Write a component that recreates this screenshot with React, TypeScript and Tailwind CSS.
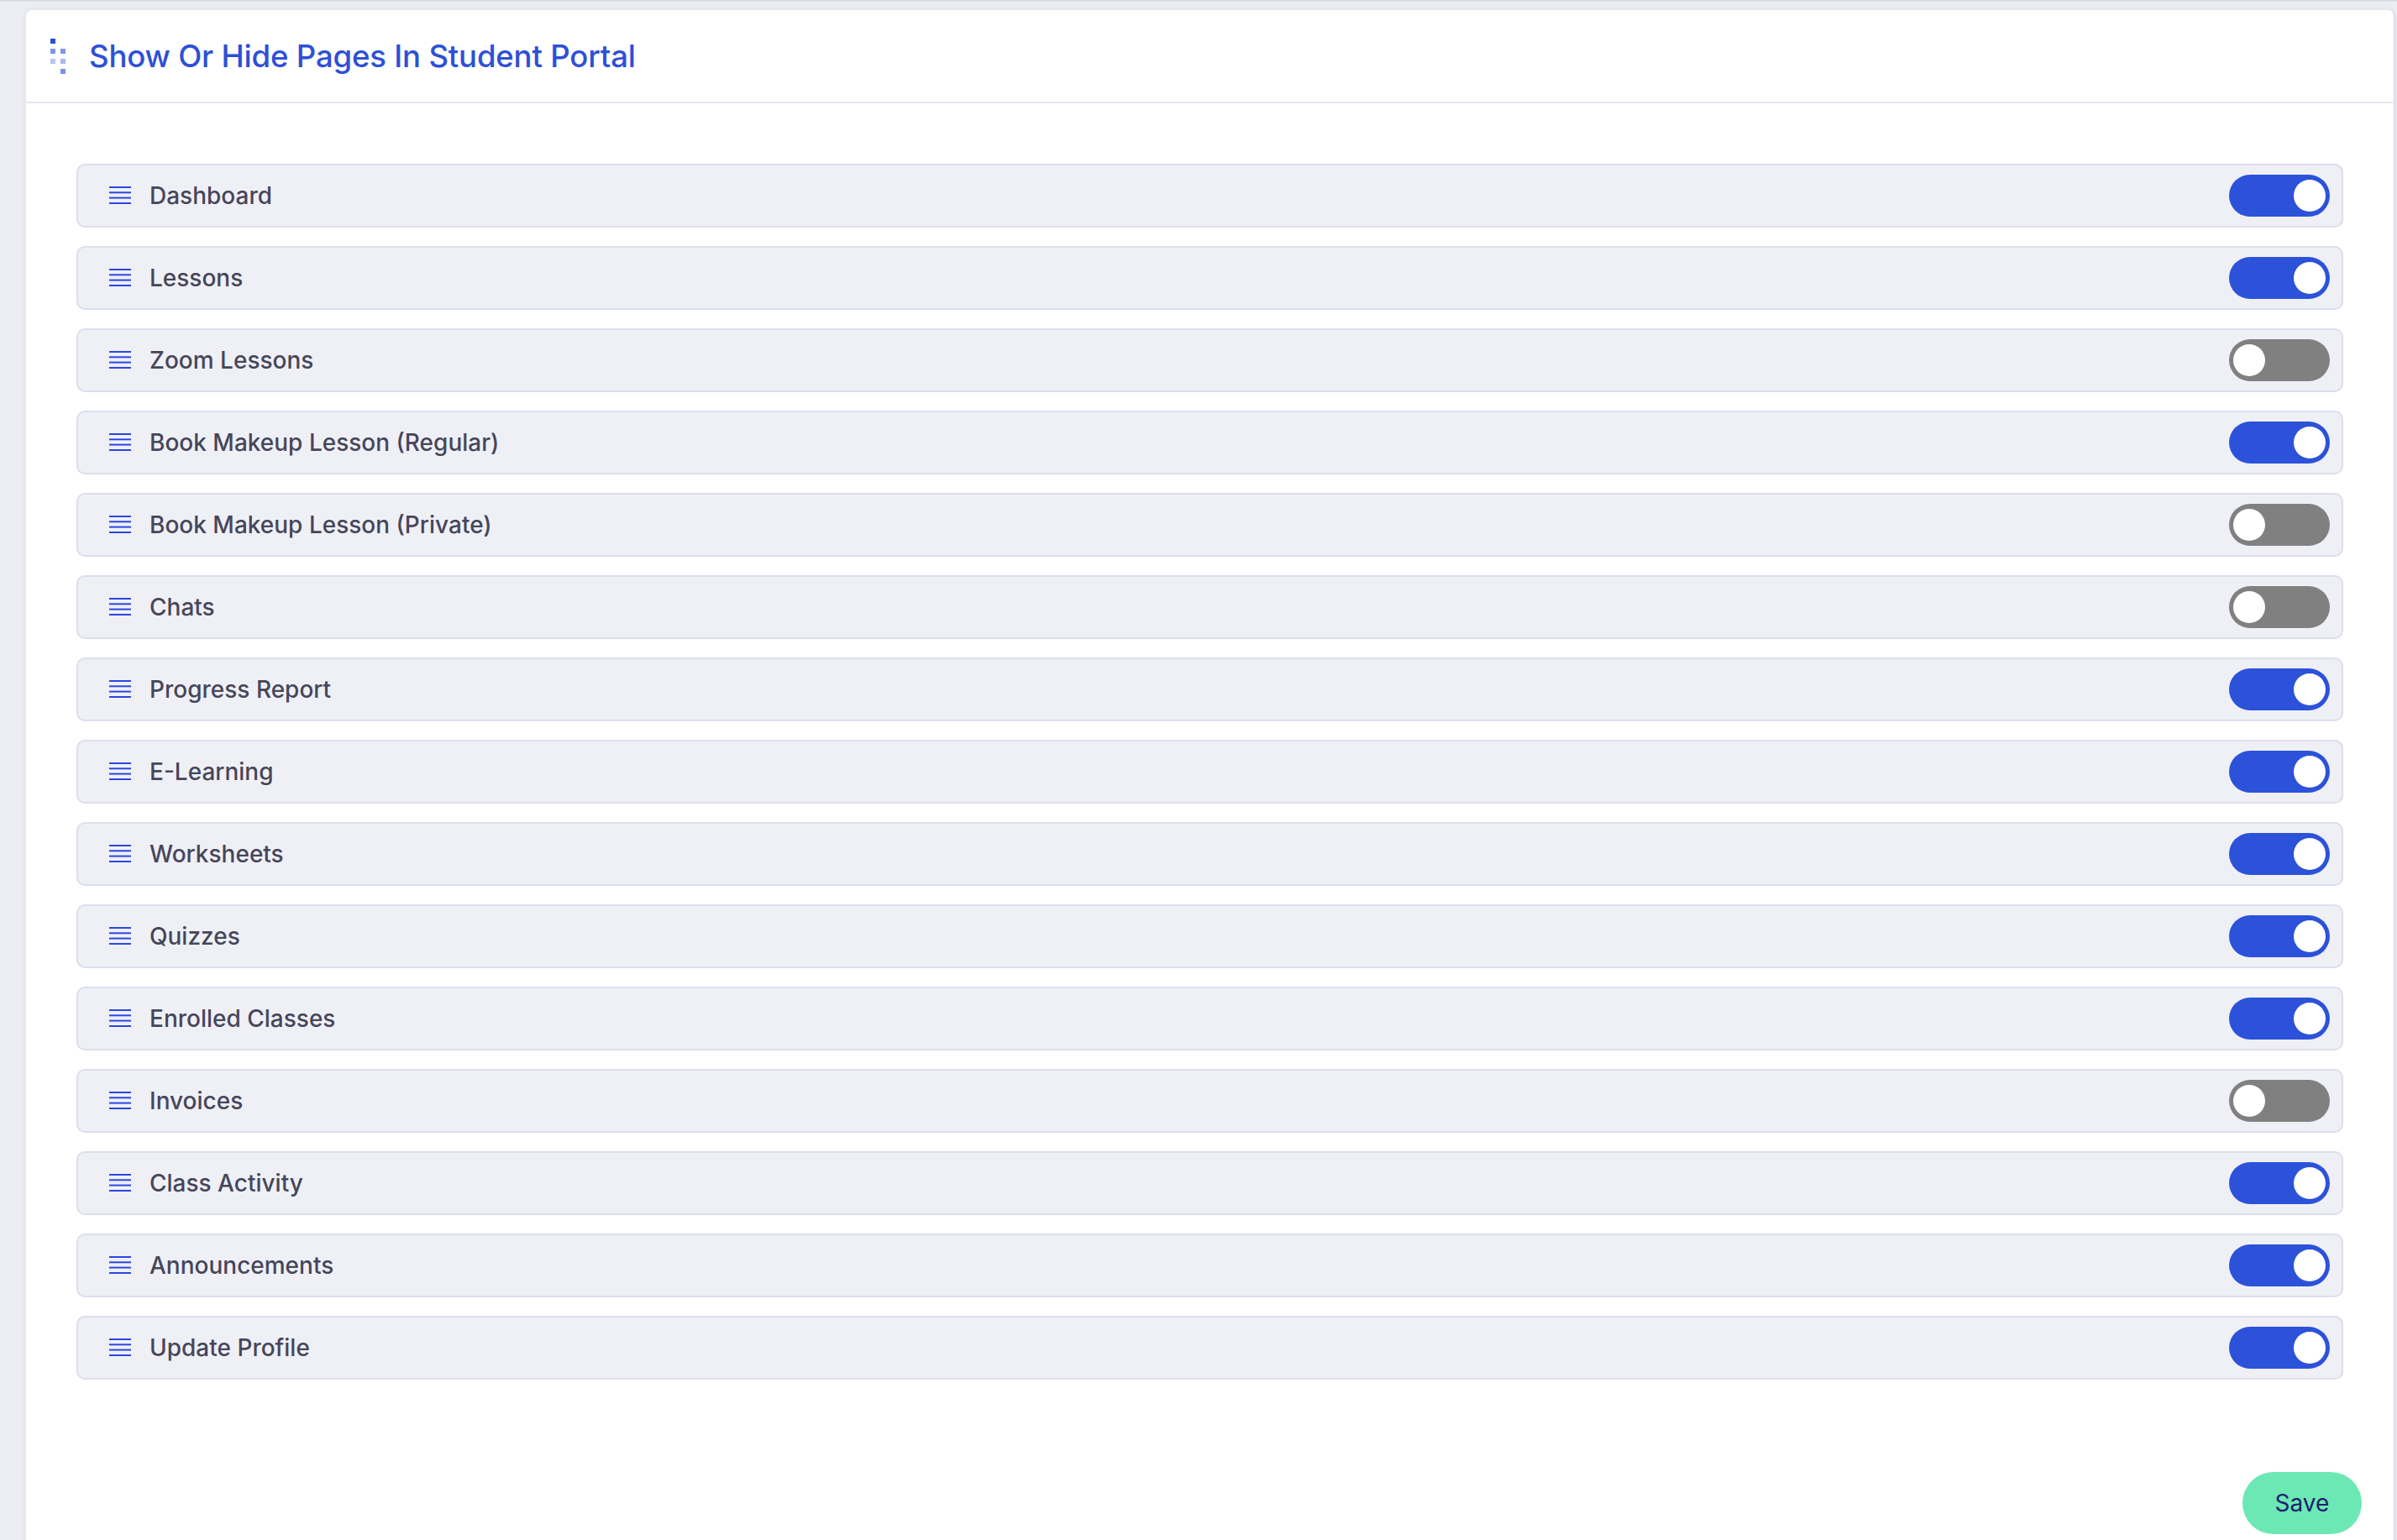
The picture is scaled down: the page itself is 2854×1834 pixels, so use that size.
import { useState } from 'react'

const PAGES: { label: string; on: boolean }[] = [
  { label: 'Dashboard', on: true },
  { label: 'Lessons', on: true },
  { label: 'Zoom Lessons', on: false },
  { label: 'Book Makeup Lesson (Regular)', on: true },
  { label: 'Book Makeup Lesson (Private)', on: false },
  { label: 'Chats', on: false },
  { label: 'Progress Report', on: true },
  { label: 'E-Learning', on: true },
  { label: 'Worksheets', on: true },
  { label: 'Quizzes', on: true },
  { label: 'Enrolled Classes', on: true },
  { label: 'Invoices', on: false },
  { label: 'Class Activity', on: true },
  { label: 'Announcements', on: true },
  { label: 'Update Profile', on: true },
]

function DragDots() {
  return (
    <svg width="18" height="44" viewBox="0 0 18 44" className="flex-shrink-0">
      <rect x="0" y="0" width="6" height="6" fill="#2c4fd6" />
      <rect x="0" y="12" width="6" height="6" fill="#8096e6" />
      <rect x="12" y="12" width="6" height="6" fill="#8096e6" />
      <rect x="0" y="24" width="6" height="6" fill="#bac5f1" />
      <rect x="12" y="24" width="6" height="6" fill="#aab7ef" />
      <rect x="12" y="36" width="6" height="6" fill="#7c90e5" />
    </svg>
  )
}

function Hamburger() {
  return (
    <svg width="26" height="22" viewBox="0 0 26 22" className="flex-shrink-0">
      {[1, 7.3, 13.6, 20].map((y) => (
        <line key={y} x1="0" x2="26" y1={y} y2={y} stroke="#2b46e0" strokeWidth="2" />
      ))}
    </svg>
  )
}

function Toggle({ on, onChange }: { on: boolean; onChange: () => void }) {
  return (
    <button
      onClick={onChange}
      className={`w-[120px] h-[50px] rounded-full flex items-center px-[5px] flex-shrink-0 ${
        on ? 'bg-[#2c52da] justify-end' : 'bg-[#808080] justify-start'
      }`}
    >
      <span className="w-[38px] h-[38px] rounded-full bg-white block" />
    </button>
  )
}

export default function App() {
  const [pages, setPages] = useState(PAGES)

  const toggle = (i: number) => {
    setPages((prev) => prev.map((p, idx) => (idx === i ? { ...p, on: !p.on } : p)))
  }

  return (
    <div
      className="min-h-screen bg-[#edeef3] border-t-2 border-[#dcdde2] pt-[10px] pl-[31px] pr-[2px]"
      style={{ fontFamily: 'Inter, "Noto Sans", sans-serif' }}
    >
      <div className="bg-white rounded-t-[8px] shadow-[0_0_10px_rgba(40,40,80,0.08)] border-r-2 border-[#dcdde6] min-h-[1830px]">
        <div className="h-[111px] flex items-center gap-[28px] pl-[29px] pt-[2px] border-b-2 border-[#e6e7ef]">
          <DragDots />
          <h1 className="text-[36.6px] font-medium text-[#2e50d6] tracking-[-0.2px]">
            Show Or Hide Pages In Student Portal
          </h1>
        </div>

        <div className="pt-[72px] pl-[60px] pr-[60px] flex flex-col gap-[22px]">
          {pages.map((p, i) => (
            <div
              key={p.label}
              className="h-[76px] bg-[#eff0f6] border-2 border-[#dddeed] rounded-[10px] flex items-center pl-[37px] pr-[14px]"
            >
              <Hamburger />
              <span className="ml-[22px] flex-1 text-[28px] font-medium text-[#46465a]">{p.label}</span>
              <Toggle on={p.on} onChange={() => toggle(i)} />
            </div>
          ))}
        </div>

        <div className="flex justify-end pr-[38px] pt-[110px] pb-[40px]">
          <button className="w-[142px] h-[74px] rounded-full bg-[#6ce8b4] text-[28px] text-[#1e1f6e]">
            Save
          </button>
        </div>
      </div>
    </div>
  )
}
